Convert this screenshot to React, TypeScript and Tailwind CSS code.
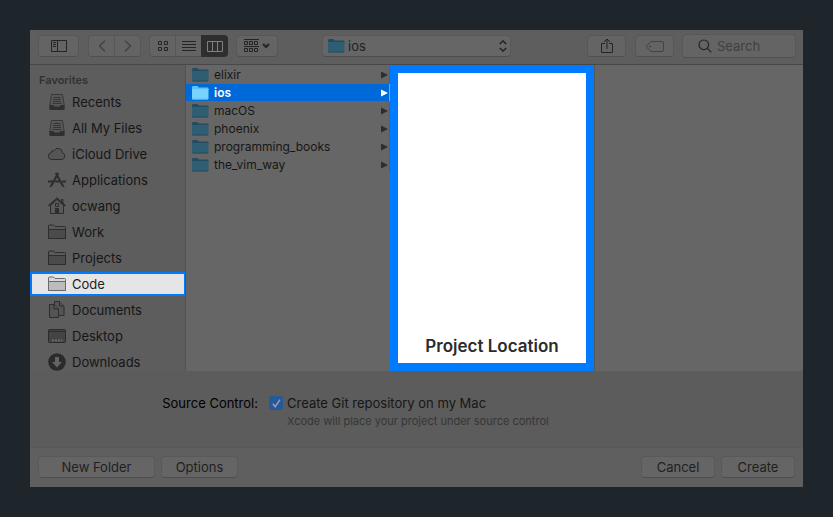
import type { ReactNode } from "react";

const controlClass =
  "flex h-[22px] items-center justify-center rounded-[4px] border border-[#575757] border-b-[#505050] bg-[#646464]";

function BlueFolder({ bright = false }: { bright?: boolean }) {
  const back = bright ? "#5cc0f5" : "#244c60";
  const front = bright ? "#79d2fb" : "#2f5d72";
  return (
    <svg width="17" height="16" viewBox="0 0 17 16" className="shrink-0" aria-hidden="true">
      <path d="M0 2.2Q0 1 1.2 1H5Q6 1 6.4 2l.4.6H15.500Q16.500 2.600 16.500 3.600V5H0Z" fill={back} />
      <path d="M0 4H16.500V13.500Q16.500 14.500 15.500 14.500H1Q0 14.500 0 13.500Z" fill={front} />
      <path d="M.5 14H16" stroke={back} strokeWidth="1" />
    </svg>
  );
}

function TrayIcon() {
  return (
    <svg width="18" height="18" viewBox="0 0 18 18" aria-hidden="true">
      <path d="M3.500 1.500h11l1.500 9.500v5H2v-5Z" fill="#585858" stroke="#383838" strokeWidth="1" />
      <path d="M5.500 4.500h7M5 6.500h8M5 8.500h8M4.500 10.500h9" stroke="#353535" strokeWidth="1" />
      <path d="M1.500 12H5.500l1 1.500h5l1-1.500h4v4q0 1-1 1h-13q-1 0-1-1Z" fill="#2f2f2f" />
    </svg>
  );
}

function CloudIcon() {
  return (
    <svg width="18" height="18" viewBox="0 0 18 18" aria-hidden="true">
      <path
        d="M3.500 14.500a3.300 3.300 0 0 1-.6-6.500A2.600 2.600 0 0 1 6 5.700a4.400 4.400 0 0 1 8.300 2 3.500 3.500 0 0 1-.3 6.800Z"
        fill="#555555"
        stroke="#2d2d2d"
        strokeWidth="1"
      />
    </svg>
  );
}

function AppsIcon() {
  return (
    <svg width="18" height="18" viewBox="0 0 18 18" fill="none" stroke="#2d2d2d" aria-hidden="true">
      <path d="M10.200 2 3 15.200" strokeWidth="2" />
      <path d="M7.800 2 15 15.200" strokeWidth="2" />
      <path d="M0 10.500H5M7 10.500H11.500M14 10.500H18" strokeWidth="2" />
      <path d="m2.600 14.200-.6 2.300M15.400 14.200l.6 2.300" strokeWidth="1" />
    </svg>
  );
}

function HomeIcon() {
  return (
    <svg width="18" height="18" viewBox="0 0 18 18" fill="none" stroke="#2d2d2d" aria-hidden="true">
      <path d="M2.500 8.500V16.500H15.500V8.500L9 2.500Z" fill="#5a5a5a" />
      <path d="M.6 9 9 1.200 17.400 9" strokeWidth="1.500" />
      <path d="M13.500 5V2.500h1.500V6.500" />
      <path d="M7.500 6.500h3v3h-3Z" />
      <path d="M7.500 11.500h3v5h-3Z" fill="#2d2d2d" />
    </svg>
  );
}

function FolderIcon({ light = false }: { light?: boolean }) {
  return (
    <svg width="18" height="18" viewBox="0 0 18 18" fill="none" stroke={light ? "#6a6a6a" : "#2d2d2d"} aria-hidden="true">
      <path
        d="M.5 15.500V3q0-1 1-1H5.500l1.500 1.500h9.500q1 0 1 1V15.500Z"
        fill={light ? "#d8d8d8" : "#5a5a5a"}
      />
      <path d="M.5 6.500h17v9H.5Z" fill={light ? "#bcbcbc" : "#4b4b4b"} />
    </svg>
  );
}

function DocumentsIcon() {
  return (
    <svg width="18" height="18" viewBox="0 0 18 18" fill="#545454" stroke="#2d2d2d" aria-hidden="true">
      <path d="M6.500.5h5l4.500 4.500v9.500H6.500Z" />
      <path d="M11.500.5V5h4.500" />
      <path d="M1.500 3.500H6l4.500 4.500v8.500h-9Z" />
      <path d="M6 3.500V8h4.500" />
    </svg>
  );
}

function DesktopIcon() {
  return (
    <svg width="18" height="18" viewBox="0 0 18 18" aria-hidden="true">
      <rect x=".5" y="2.500" width="17" height="13" rx="1" fill="#444444" stroke="#2b2b2b" />
      <path d="M1 4.500h16" stroke="#2b2b2b" />
      <path d="M4 13.500h2M7 13.500h2M10 13.500h2M13 13.500h1.500" stroke="#6b6b6b" strokeWidth="2" />
    </svg>
  );
}

function DownloadsIcon() {
  return (
    <svg width="18" height="18" viewBox="0 0 18 18" aria-hidden="true">
      <circle cx="9" cy="9" r="8.800" fill="#2b2b2b" />
      <path d="M7 4h4v5h3l-5 5.500L4 9h3Z" fill="#646464" />
    </svg>
  );
}

const favorites: { name: string; icon: ReactNode; active?: boolean }[] = [
  { name: "Recents", icon: <TrayIcon /> },
  { name: "All My Files", icon: <TrayIcon /> },
  { name: "iCloud Drive", icon: <CloudIcon /> },
  { name: "Applications", icon: <AppsIcon /> },
  { name: "ocwang", icon: <HomeIcon /> },
  { name: "Work", icon: <FolderIcon /> },
  { name: "Projects", icon: <FolderIcon /> },
  { name: "Code", icon: <FolderIcon light />, active: true },
  { name: "Documents", icon: <DocumentsIcon /> },
  { name: "Desktop", icon: <DesktopIcon /> },
  { name: "Downloads", icon: <DownloadsIcon /> },
];

const folders = ["elixir", "ios", "macOS", "phoenix", "programming_books", "the_vim_way"];
const selectedFolder = "ios";

function Toolbar() {
  return (
    <header className="flex h-[35px] items-center border-b border-[#484848] bg-[#5e5e5e] pb-[2px] pl-2 pr-[7px]">
      <button type="button" aria-label="Toggle sidebar" className={`${controlClass} w-[41px]`}>
        <svg width="16" height="12" viewBox="0 0 16 12" fill="none" stroke="#242424">
          <path d="M.5.5h15v11H.5ZM6.500.5v11M2 2.500h3M2 4.500h3M2 6.500h3" />
        </svg>
      </button>

      <div className="ml-[9px] flex">
        <button type="button" aria-label="Back" className={`${controlClass} w-[27px] rounded-r-none`}>
          <svg width="8" height="12" viewBox="0 0 8 12" fill="none" stroke="#434343" strokeWidth="1.500">
            <path d="M7 .7 1.500 6 7 11.300" />
          </svg>
        </button>
        <button type="button" aria-label="Forward" className={`${controlClass} w-[26px] rounded-l-none border-l-0`}>
          <svg width="8" height="12" viewBox="0 0 8 12" fill="none" stroke="#434343" strokeWidth="1.500">
            <path d="M1 .7 6.500 6 1 11.300" />
          </svg>
        </button>
      </div>

      <div className="ml-2 flex">
        <button type="button" aria-label="Icon view" className={`${controlClass} w-[27px] rounded-r-none`}>
          <svg width="10" height="10" viewBox="0 0 10 10" fill="none" stroke="#242424">
            <path d="M.5.5h3v3h-3ZM6.500.5h3v3h-3ZM.5 6.500h3v3h-3ZM6.500 6.500h3v3h-3Z" />
          </svg>
        </button>
        <button type="button" aria-label="List view" className={`${controlClass} w-[25px] rounded-none border-x-0`}>
          <svg width="14" height="10" viewBox="0 0 14 10" stroke="#242424">
            <path d="M0 .5h14M0 3.500h14M0 6.500h14M0 9.500h14" />
          </svg>
        </button>
        <button
          type="button"
          aria-label="Column view"
          aria-pressed="true"
          className="flex h-[22px] w-[27px] items-center justify-center rounded-r-[4px] bg-[#2e2e2e]"
        >
          <svg width="16" height="11" viewBox="0 0 16 11" fill="none" stroke="#818181">
            <path d="M.5.5h15v10H.5ZM5.500.5v10M10.500.5v10" />
          </svg>
        </button>
      </div>

      <button type="button" aria-label="Group items" className={`${controlClass} ml-2 w-[42px] gap-[3px]`}>
        <svg width="15" height="14" viewBox="0 0 15 14" fill="none" stroke="#242424">
          <path d="M0 .5h15M0 7.500h15M.5 2.500h3v3h-3ZM5.500 2.500h3v3h-3ZM10.500 2.500h3v3h-3ZM.5 9.500h3v3h-3ZM5.500 9.500h3v3h-3ZM10.500 9.500h3v3h-3Z" />
        </svg>
        <svg width="8" height="6" viewBox="0 0 8 6" fill="none" stroke="#242424" strokeWidth="2">
          <path d="m1 1 3 3 3-3" />
        </svg>
      </button>

      <div className="relative ml-11 mr-[76px] min-w-0 flex-1">
        <select
          aria-label="Location"
          className="block h-[22px] w-full appearance-none rounded-[4px] border border-[#595959] border-b-[#4e4e4e] bg-[#666666] pl-[25px] text-[13px] leading-5 text-[#222222]"
        >
          <option>ios</option>
        </select>
        <span className="pointer-events-none absolute left-[6px] top-[3px]">
          <BlueFolder />
        </span>
        <svg
          className="pointer-events-none absolute right-[4px] top-[5px]"
          width="8"
          height="12"
          viewBox="0 0 8 12"
          fill="none"
          stroke="#242424"
          strokeWidth="1.500"
        >
          <path d="M.8 4 4 .9l3.200 3.100M.8 8 4 11.100 7.200 8" />
        </svg>
      </div>

      <button type="button" aria-label="Share" className={`${controlClass} w-[39px]`}>
        <svg width="12" height="16" viewBox="0 0 12 16" fill="none" stroke="#242424">
          <path d="M4 5.500H.5v9h11v-9H8M6 11V1M3 4l3-3 3 3" />
        </svg>
      </button>
      <button type="button" aria-label="Tags" className={`${controlClass} ml-[9px] w-[39px]`}>
        <svg width="18" height="11" viewBox="0 0 18 11" fill="none" stroke="#434343">
          <path d="M5 .5H16q1.500 0 1.500 1.500V9q0 1.500-1.500 1.500H5L.8 6.500q-.8-1 0-2Z" />
          <circle cx="4" cy="5.500" r=".6" fill="#434343" />
        </svg>
      </button>
      <label className="ml-2 flex h-6 w-[114px] items-center rounded-[4px] border border-[#575757] border-b-[#505050] bg-[#646464] pl-[15px]">
        <svg width="14" height="14" viewBox="0 0 14 14" fill="none" stroke="#242424" strokeWidth="1.200" className="shrink-0">
          <circle cx="5.800" cy="5.800" r="4.800" />
          <path d="m9.300 9.300 4 4" />
        </svg>
        <input
          type="text"
          aria-label="Search"
          placeholder="Search"
          className="ml-[5px] w-full min-w-0 bg-transparent text-[13px] leading-5 outline-none placeholder:text-[#404040]"
        />
      </label>
    </header>
  );
}

function Sidebar() {
  return (
    <nav className="w-[156px] shrink-0 overflow-hidden border-r border-[#525252] bg-[#5d5d5d]">
      <h2 className="h-6 pl-[9px] pt-[7px] text-[11px] font-semibold leading-4 text-[#313131]">Favorites</h2>
      <ul>
        {favorites.map((item) => (
          <li key={item.name} className="h-[26px] py-px">
            <button
              type="button"
              className={
                item.active
                  ? "-mr-px flex h-6 w-[156px] items-center gap-[6px] border-2 border-[#007aff] bg-[#e5e5e5] pl-4 text-[13px] leading-5 text-[#222222]"
                  : "flex h-6 w-full items-center gap-[6px] pl-[18px] text-[13px] leading-5 text-[#161616]"
              }
            >
              {item.icon}
              {item.name}
            </button>
          </li>
        ))}
      </ul>
    </nav>
  );
}

function FolderColumn() {
  return (
    <ul className="flex w-[204px] shrink-0 flex-col gap-px pt-px">
      {folders.map((name) => {
        const selected = name === selectedFolder;
        return (
          <li key={name}>
            <button
              type="button"
              className={
                selected
                  ? "flex h-[17px] w-full items-center border-r border-[#66adf2] bg-[#0069d9] pl-[6px] pr-px text-[12px] font-semibold leading-4 text-white"
                  : "flex h-[17px] w-full items-center border-r border-[#5c5c5c] pl-[6px] pr-px text-[12px] leading-4 text-[#161616]"
              }
            >
              <BlueFolder bright={selected} />
              <span className="ml-[5px] flex-1 text-left">{name}</span>
              <svg width="7" height="8" viewBox="0 0 7 8" fill={selected ? "#ffffff" : "#2d2d2d"} aria-hidden="true">
                <path d="M0 0.500 7 4 0 7.500Z" />
              </svg>
            </button>
          </li>
        );
      })}
    </ul>
  );
}

const pushButton =
  "h-[22px] rounded-[4px] border border-[#595959] border-b-[#4e4e4e] bg-[#656565] text-[13px] leading-5 text-[#1f1f1f]";

export default function App() {
  return (
    <main className="min-h-screen bg-[#1e262c] p-[30px] font-['Inter','Liberation_Sans',sans-serif]">
      <div className="bg-[#5c5c5c]">
        <Toolbar />
        <div className="flex h-[306px] bg-[#666666]">
          <Sidebar />
          <FolderColumn />
          <section className="flex w-[204px] shrink-0 items-end justify-center border-8 border-[#007aff] bg-white pb-[5px]">
            <h1 className="text-[17px] font-semibold leading-6 text-[#2b2b2b]">Project Location</h1>
          </section>
          <div className="flex-1 border-l border-[#575757]" />
        </div>

        <div className="grid h-[76px] grid-cols-[228px_1fr] gap-x-[11px] pt-[22px]">
          <label htmlFor="git" className="text-right text-[13px] leading-5 text-[#000000]">
            Source Control:
          </label>
          <div>
            <div className="flex items-center">
              <span className="relative flex">
                <input
                  id="git"
                  type="checkbox"
                  defaultChecked
                  className="peer h-[14px] w-[14px] appearance-none rounded-[3px] bg-[#5a5a5a] checked:bg-[#235a9c]"
                />
                <svg
                  className="pointer-events-none absolute left-[3px] top-[3px] hidden peer-checked:block"
                  width="9"
                  height="9"
                  viewBox="0 0 9 9"
                  fill="none"
                  stroke="#a0a0a0"
                  strokeWidth="1.500"
                >
                  <path d="m.8 4.800 2.400 2.900L8 .6" />
                </svg>
              </span>
              <label htmlFor="git" className="ml-1 text-[13px] leading-5 text-[#161616]">
                Create Git repository on my Mac
              </label>
            </div>
            <p className="pl-[18px] text-[11px] leading-4 text-[#363636]">
              Xcode will place your project under source control
            </p>
          </div>
        </div>

        <footer className="flex gap-[6px] border-t border-[#585858] bg-[#5f5f5f] px-2 pb-[9px] pt-2">
          <button type="button" className={`${pushButton} w-[117px]`}>
            New Folder
          </button>
          <button type="button" className={`${pushButton} w-[77px]`}>
            Options
          </button>
          <button type="button" className={`${pushButton} ml-auto w-[74px]`}>
            Cancel
          </button>
          <button type="button" className={`${pushButton} w-[74px]`}>
            Create
          </button>
        </footer>
      </div>
    </main>
  );
}
